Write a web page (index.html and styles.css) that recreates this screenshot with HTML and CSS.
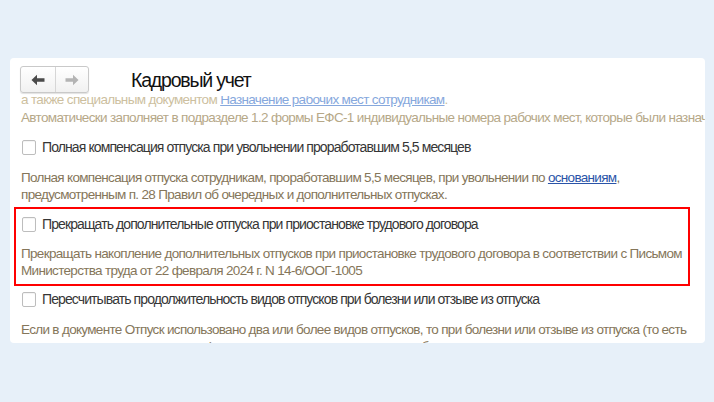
FILE: index.html
```html
<!DOCTYPE html>
<html lang="ru">
<head>
<meta charset="utf-8">
<title>Кадровый учет</title>
<link rel="stylesheet" href="styles.css">
</head>
<body>
<div class="page">
  <div class="panel">
    <div class="header">
      <div class="nav">
        <button class="nav-btn back" type="button" aria-label="Назад">
          <svg width="14" height="12" viewBox="0 0 14 12"><path d="M0.5 6 L6 0.8 L6 4.2 L13.5 4.2 L13.5 7.8 L6 7.8 L6 11.2 Z" fill="#4a4a4a"/></svg>
        </button>
        <button class="nav-btn fwd" type="button" aria-label="Вперед">
          <svg width="14" height="12" viewBox="0 0 14 12"><path d="M13.5 6 L8 0.8 L8 4.2 L0.5 4.2 L0.5 7.8 L8 7.8 L8 11.2 Z" fill="#b4b4b4"/></svg>
        </button>
      </div>
      <div class="title">Кадровый учет</div>
    </div>
    <div class="scroll">
      <div class="content">
        <p class="intro">
          <span class="faint1">а также специальным документом <a href="#" class="faint-link">Назначение рабочих мест сотрудникам</a>.</span><br>
          <span class="faint2">Автоматически заполняет в подразделе 1.2 формы ЕФС-1 индивидуальные номера рабочих мест, которые были назначены</span>
        </p>

        <div class="opt">
          <span class="check"></span>
          <span class="label">Полная компенсация отпуска при увольнении проработавшим 5,5 месяцев</span>
        </div>
        <p class="desc">Полная компенсация отпуска сотрудникам, проработавшим 5,5 месяцев, при увольнении по <a href="#" class="link">основаниям</a>,<br>предусмотренным п. 28 Правил об очередных и дополнительных отпусках.</p>

        <div class="box">
          <div class="opt">
            <span class="check"></span>
            <span class="label">Прекращать дополнительные отпуска при приостановке трудового договора</span>
          </div>
          <p class="desc">Прекращать накопление дополнительных отпусков при приостановке трудового договора в соответствии с Письмом<br>Министерства труда от 22 февраля 2024 г. N 14-6/ООГ-1005</p>
        </div>

        <div class="opt">
          <span class="check"></span>
          <span class="label">Пересчитывать продолжительность видов отпусков при болезни или отзыве из отпуска</span>
        </div>
        <p class="desc">Если в документе Отпуск использовано два или более видов отпусков, то при болезни или отзыве из отпуска (то есть<br>продления или переноса отпуска) продолжительность видов отпусков будет пересчитана пропорционально.</p>
      </div>
    </div>
  </div>
</div>
</body>
</html>
```

FILE: styles.css
```css
html, body {
  margin: 0;
  padding: 0;
}
body {
  background: #e7f0f9;
  font-family: "Liberation Sans", Arial, sans-serif;
  width: 714px;
  height: 402px;
  overflow: hidden;
}
.page {
  padding: 58px 9px 0 10px;
}
.panel {
  background: #ffffff;
  border-radius: 4px;
  height: 285px;
  display: flex;
  flex-direction: column;
  overflow: hidden;
}
.header {
  height: 38px;
  flex: none;
  display: flex;
  align-items: flex-start;
  padding: 8px 0 0 10px;
  box-sizing: border-box;
}
.nav {
  display: flex;
  width: 69px;
  height: 27px;
  box-sizing: border-box;
  border: 1px solid #c9c9c9;
  border-radius: 3px;
  background: linear-gradient(#ffffff, #f1f1f1);
  box-shadow: 0 1px 1px rgba(0,0,0,0.12);
  overflow: hidden;
}
.nav-btn {
  flex: none;
  border: 0;
  padding: 0;
  margin: 0;
  background: transparent;
  height: 25px;
  display: flex;
  align-items: center;
  justify-content: center;
}
.nav-btn.back {
  width: 35px;
  border-right: 1px solid #d6d6d6;
}
.nav-btn.fwd {
  width: 32px;
}
.title {
  margin: 3px 0 0 42px;
  font-size: 19.5px;
  letter-spacing: -1.2px;
  line-height: 22px;
  color: #111;
}
.scroll {
  flex: 1;
  overflow: hidden;
}
.content {
  padding-left: 11px;
  margin-top: -5px;
}
p {
  margin: 0;
}
.intro {
  font-size: 13.5px;
  letter-spacing: -0.65px;
  line-height: 18px;
  white-space: nowrap;
  margin-bottom: 12px;
}
.faint1 {
  color: #cdbf9f;
}
.faint-link {
  color: #86a8dd;
}
.faint2 {
  color: #b6a888;
}
.opt {
  display: flex;
  align-items: center;
  height: 17px;
  white-space: nowrap;
}
.check {
  flex: none;
  width: 14px;
  height: 15px;
  box-sizing: border-box;
  border: 1px solid #bdbdbd;
  border-radius: 2px;
  background: #fff;
  box-shadow: inset 0 1px 1px rgba(0,0,0,0.05);
  margin: 0 6px 0 1px;
}
.label {
  font-size: 14px;
  letter-spacing: -0.9px;
  line-height: 17px;
  color: #363636;
}
.desc {
  margin-top: 13px;
  font-size: 13.5px;
  letter-spacing: -0.68px;
  line-height: 17px;
  color: #85765a;
  white-space: nowrap;
}
.link {
  color: #2a54a8;
}
.box {
  width: 676px;
  box-sizing: border-box;
  margin: 4px 0 5px -7px;
  border: 2px solid #ff0000;
  padding: 7px 0 5px 5px;
}
.box .desc {
  margin-top: 12px;
}
```
